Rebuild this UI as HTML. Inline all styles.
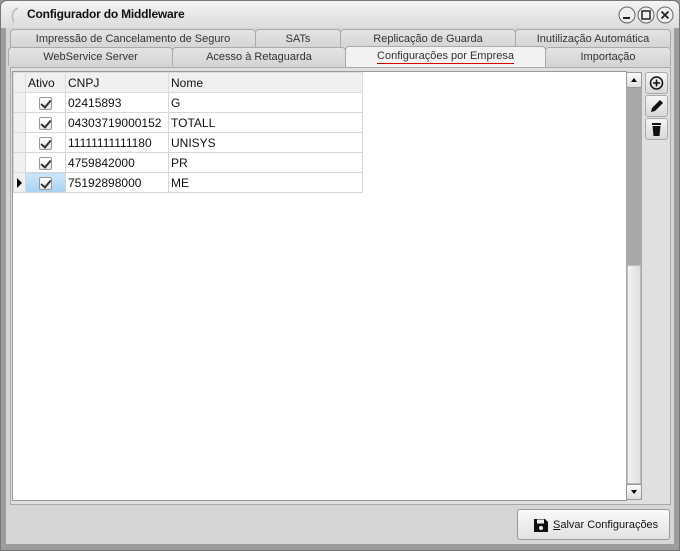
<!DOCTYPE html>
<html><head><meta charset="utf-8"><style>
*{box-sizing:border-box;margin:0;padding:0}
body{width:680px;height:551px;background:#9c9c9c;font-family:"Liberation Sans",sans-serif;font-size:12px;color:#111;position:relative;overflow:hidden}
.abs{position:absolute}
.win{left:0;top:0;width:680px;height:551px;border:1px solid #777;border-radius:6px 6px 0 0;background:#9c9c9c}
.title{left:1px;top:1px;width:678px;height:27px;background:linear-gradient(#f4f4f4,#dcdcdc);border-radius:6px 6px 0 0}
.title span{position:absolute;left:26px;top:6px;font-weight:bold;font-size:12px;letter-spacing:-0.2px}
.content{left:6px;top:28px;width:668px;height:516px;background:#d6d6d6}
.tab{position:absolute;height:19px;background:linear-gradient(#e4e4e4,#d4d4d4);border:1px solid #aaa;border-bottom:none;border-radius:4px 4px 0 0;text-align:center;font-size:11px;line-height:18px;color:#333}
.tab.act{background:#f2f2f2;height:21px}
.panel{left:10px;top:67px;width:661px;height:438px;background:#e0e0e0;border:1px solid #aaa}
.grid{left:12px;top:71px;width:615px;height:430px;background:#fff;border:1px solid #999}
table{position:absolute;left:0;top:0;border-collapse:collapse}
td{height:20px;border:1px solid #d8d8d8;padding:0 2px;font-size:12px;white-space:nowrap}
tr.h td{background:#f0f0f0;border-color:#ddd}
td.rh{width:12px;background:#f0f0f0;padding:0}
td.cb{width:40px;text-align:center;padding:0}
.chk{display:inline-block;width:13px;height:13px;border:1px solid #999;border-radius:2px;background:linear-gradient(#fff,#e6e6e6);vertical-align:middle;position:relative}
.chk:after{content:"";position:absolute;left:3px;top:0px;width:4px;height:8px;border:solid #333;border-width:0 2px 2px 0;transform:rotate(40deg)}
.sb{left:626px;top:72px;width:16px;height:428px;background:#a8a8a8}
.sbtn{position:absolute;left:0;width:16px;height:16px;background:linear-gradient(#fafafa,#dedede);border:1px solid #999;border-radius:2px}
.side{position:absolute;left:645px;width:23px;height:22px;background:linear-gradient(#f6f6f6,#d8d8d8);border:1px solid #aaa;border-radius:3px}
.btn{left:517px;top:509px;width:153px;height:31px;background:linear-gradient(#fafafa,#e2e2e2);border:1px solid #999;border-radius:3px;font-size:11px}
</style></head><body>
<div class="abs win"></div>
<div class="abs title"><svg class="abs" style="left:8px;top:6px" width="12" height="16"><path d="M9 1 C3 3 2 10 5 15" stroke="#bbb" stroke-width="1.5" fill="none"/></svg><span>Configurador do Middleware</span>
<svg class="abs" style="left:617px;top:5px" width="58" height="18">
<g fill="#f0f0f0" stroke="#666"><circle cx="9" cy="9" r="8"/><circle cx="28" cy="9" r="8"/><circle cx="47" cy="9" r="8"/></g>
<rect x="5" y="11" width="7" height="2" fill="#222"/><rect x="24" y="5" width="8" height="8" fill="none" stroke="#222" stroke-width="1.5"/>
<path d="M43.5 5.5l7 7M50.5 5.5l-7 7" stroke="#222" stroke-width="1.8"/></svg></div>
<div class="abs content"></div>
<div class="tab" style="left:10px;top:29px;width:246px">Impressão de Cancelamento de Seguro</div>
<div class="tab" style="left:255px;top:29px;width:86px">SATs</div>
<div class="tab" style="left:340px;top:29px;width:176px">Replicação de Guarda</div>
<div class="tab" style="left:515px;top:29px;width:156px">Inutilização Automática</div>
<div class="tab" style="left:8px;top:47px;width:165px">WebService Server</div>
<div class="tab" style="left:172px;top:47px;width:174px">Acesso à Retaguarda</div>
<div class="tab" style="left:545px;top:47px;width:126px">Importação</div>
<div class="abs panel"></div>
<div class="tab act" style="left:345px;top:46px;width:201px;border-color:#aaa"><span style="border-bottom:1px solid #c00;padding-bottom:1px">Configurações por Empresa</span></div>
<div class="abs grid">
<table>
<tr class="h"><td class="rh"></td><td style="width:40px">Ativo</td><td style="width:103px">CNPJ</td><td style="width:194px">Nome</td></tr>
<tr><td class="rh"></td><td class="cb"><span class="chk"></span></td><td>02415893</td><td>G</td></tr>
<tr><td class="rh"></td><td class="cb"><span class="chk"></span></td><td>04303719000152</td><td>TOTALL</td></tr>
<tr><td class="rh"></td><td class="cb"><span class="chk"></span></td><td>11111111111180</td><td>UNISYS</td></tr>
<tr><td class="rh"></td><td class="cb"><span class="chk"></span></td><td>4759842000</td><td>PR</td></tr>
<tr><td class="rh" style="position:relative"><svg style="position:absolute;left:3px;top:5px" width="6" height="10"><path d="M0 0L5 5L0 10Z" fill="#000"/></svg></td><td class="cb" style="background:linear-gradient(#cfe6f8,#a8d2f0)"><span class="chk"></span></td><td>75192898000</td><td>ME</td></tr>
</table></div>
<div class="abs sb">
<div class="sbtn" style="top:0"><svg width="14" height="14"><path d="M4 9L7 5L10 9Z" fill="#000"/></svg></div>
<div style="position:absolute;left:1px;top:193px;width:14px;height:219px;background:linear-gradient(90deg,#f2f2f2,#e0e0e0);border:1px solid #bbb;border-radius:2px"></div>
<div class="sbtn" style="top:412px"><svg width="14" height="14"><path d="M4 5L7 9L10 5Z" fill="#000"/></svg></div>
</div>
<div class="side" style="top:72px"><svg width="21" height="20"><circle cx="10.5" cy="10" r="6" fill="none" stroke="#111" stroke-width="1.5"/><path d="M10.5 6.5v7M7 10h7" stroke="#111" stroke-width="1.6"/></svg></div>
<div class="side" style="top:95px"><svg width="21" height="20"><path d="M5 16l1-4 8-8 3 3-8 8z" fill="#111"/></svg></div>
<div class="side" style="top:118px"><svg width="21" height="20"><rect x="6" y="4" width="9" height="2" fill="#111"/><path d="M6.5 7h8l-1 10h-6z" fill="#111"/></svg></div>
<div class="abs btn"><svg class="abs" style="left:16px;top:8px" width="14" height="14"><path d="M0 1h11l3 3v10H0z" fill="#111"/><rect x="3" y="1.5" width="7" height="4" fill="#eee"/><circle cx="7" cy="10" r="2" fill="#eee"/></svg><span class="abs" style="left:35px;top:9px"><u>S</u>alvar Configurações</span></div>
</body></html>
